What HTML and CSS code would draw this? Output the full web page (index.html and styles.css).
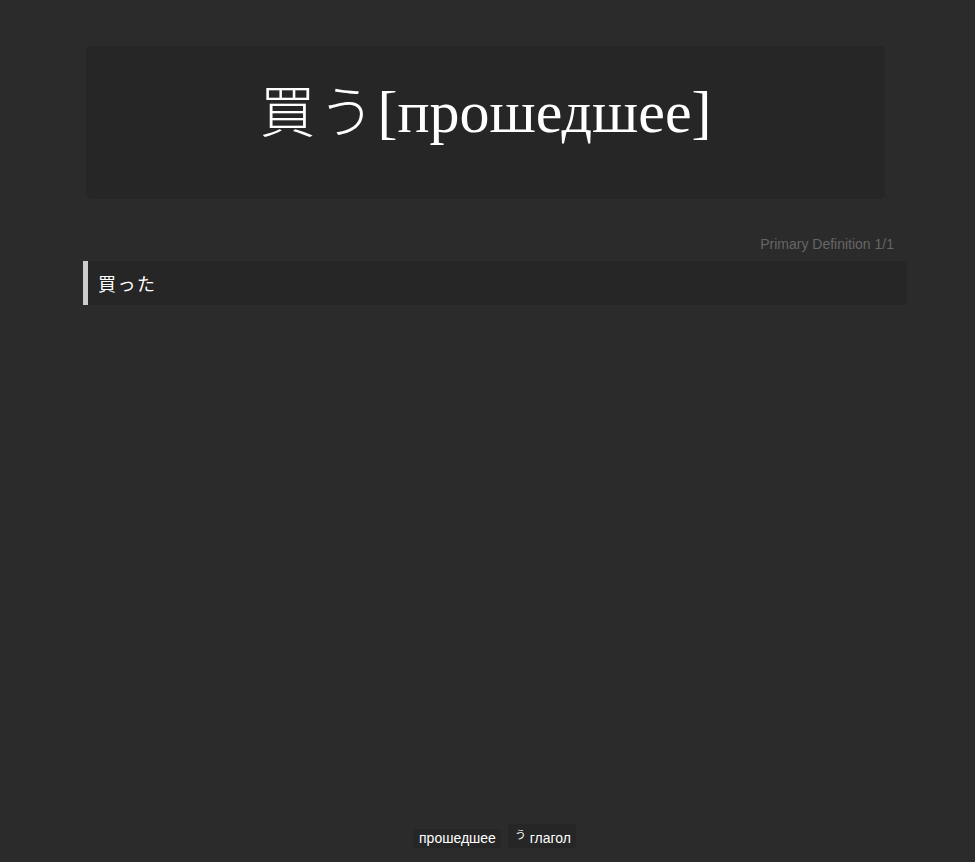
FILE: index.html
```html
<!DOCTYPE html>
<html lang="ja">
<head>
    <meta charset="UTF-8">
    <title>買う[прошедшее]</title>
    <link rel="stylesheet" href="styles.css">
</head>
<body>
    <div class="card">
        <div class="front">
            <h1 class="term"><span class="term-kanji">買う</span>[прошедшее]</h1>
        </div>
        <div class="definition">
            <div class="def-label">Primary Definition 1/1</div>
            <div class="def-text">買った</div>
        </div>
    </div>
    <div class="tags">
        <span class="tag">прошедшее</span>
        <span class="tag tag-tall"><span class="kana">う</span> глагол</span>
    </div>
</body>
</html>
```

FILE: styles.css
```css
html, body {
    height: 100%;
}
body {
    margin: 0;
    background: #2b2b2b;
    color: #fff;
    font-family: 'Liberation Serif', 'Noto Sans CJK JP', serif;
    display: flex;
    flex-direction: column;
}
.card {
    flex: 1;
    padding: 46px 68px 0 83px;
}
.front {
    background: #262626;
    border-radius: 5px;
    margin: 0 22px 0 3px;
    height: 153px;
    display: flex;
    justify-content: center;
}
.term {
    margin: 0;
    padding-top: 22px;
    font-size: 60px;
    font-weight: normal;
    line-height: 80px;
}
.term-kanji {
    font-family: 'Noto Sans CJK JP', sans-serif;
    font-weight: 300;
    font-size: 56px;
    letter-spacing: 3px;
}
.definition {
    margin-top: 37px;
}
.def-label {
    font-family: 'Liberation Sans', Arial, sans-serif;
    font-size: 14px;
    color: #666;
    text-align: right;
    padding-right: 13px;
    line-height: 16px;
    margin-bottom: 9px;
}
.def-text {
    background: #262626;
    border-left: 5px solid #cccccc;
    padding: 0 10px;
    height: 44px;
    line-height: 44px;
    font-family: 'Noto Sans CJK JP', sans-serif;
    font-size: 18px;
    letter-spacing: 1.5px;
}
.tags {
    display: flex;
    justify-content: center;
    align-items: flex-end;
    gap: 7px;
    padding-bottom: 14px;
    padding-left: 14px;
}
.tag {
    background: #262626;
    border-radius: 4px;
    padding: 1px 5px 1px 6px;
    font-family: 'Liberation Sans', Arial, sans-serif;
    font-size: 14px;
    line-height: 17px;
}
.tag-tall {
    padding-top: 5px;
    padding-bottom: 1px;
    padding-left: 7px;
}
.kana {
    font-family: 'Noto Sans CJK JP', sans-serif;
    font-size: 11px;
    vertical-align: 4px;
    line-height: 10px;
}
```
